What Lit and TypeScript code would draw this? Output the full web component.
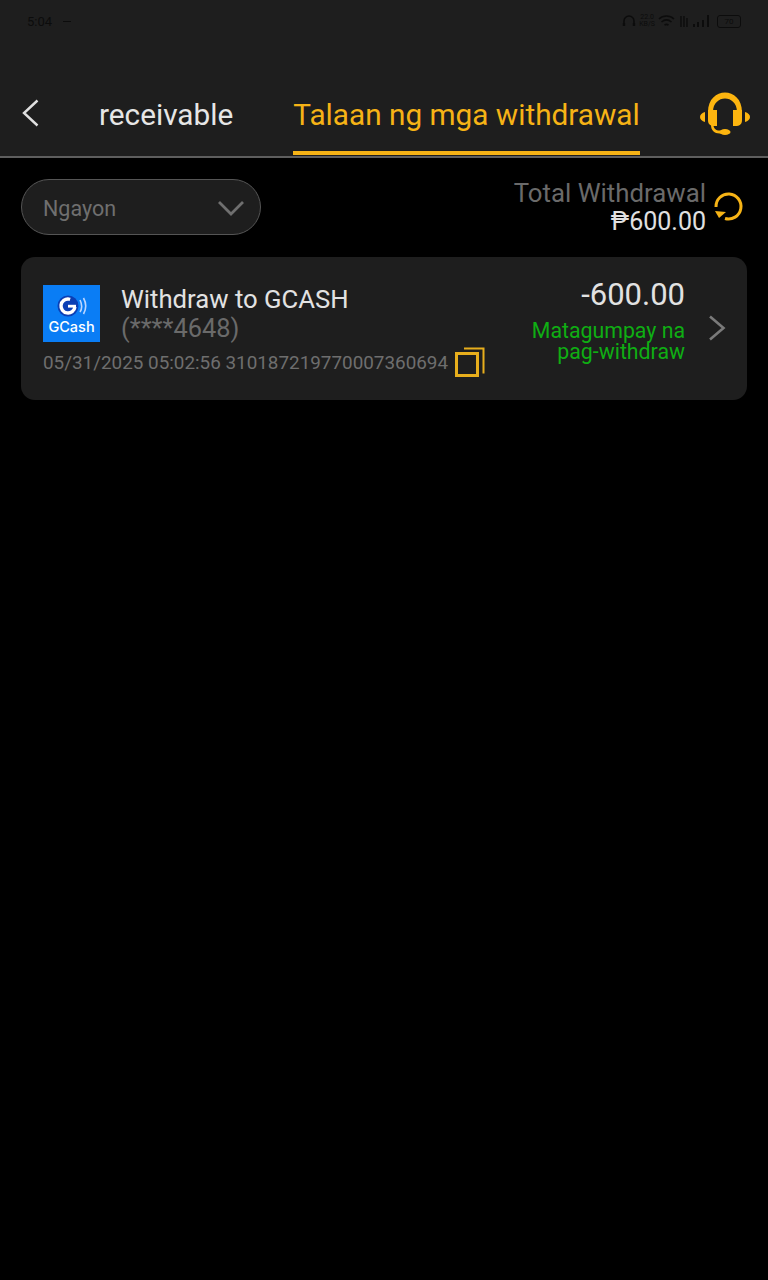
import { LitElement, css, html } from "lit";
import { customElement } from "lit/decorators.js";

@customElement("app-root")
export class AppRoot extends LitElement {
  static styles = css`
    :host {
      display: block;
      width: 768px;
      height: 1280px;
      background: #000;
      font-family: Roboto, "Liberation Sans", sans-serif;
      overflow: hidden;
    }
    svg {
      display: block;
      flex-shrink: 0;
    }
    .top {
      background: #1e1e1e;
      border-bottom: 2px solid #5e5e5e;
      height: 156px;
      display: flex;
      flex-direction: column;
    }
    .status {
      height: 42px;
      padding: 0 27px;
      display: flex;
      align-items: center;
      justify-content: space-between;
      color: #0c0c0c;
      font-size: 13px;
    }
    .status-left {
      display: flex;
      align-items: center;
      gap: 11px;
    }
    .dash {
      width: 8px;
      height: 1px;
      background: #0c0c0c;
    }
    .status-right {
      display: flex;
      align-items: center;
      gap: 3px;
    }
    .speed {
      font-size: 7px;
      line-height: 7px;
      text-align: center;
    }
    .battery {
      width: 22px;
      height: 11px;
      border: 1px solid #0c0c0c;
      border-radius: 3px;
      font-size: 8px;
      line-height: 11px;
      text-align: center;
      margin-left: 3px;
    }
    .nav {
      flex: 1;
      display: flex;
      align-items: stretch;
      padding-left: 21px;
    }
    .back {
      align-self: center;
      margin-top: 27px;
    }
    .tab {
      display: flex;
      align-items: center;
      font-size: 29.75px;
      white-space: nowrap;
      padding-top: 36px;
      box-sizing: border-box;
      border-bottom: 4px solid transparent;
      margin-bottom: 1px;
      color: #e6e6e6;
    }
    .tab.first {
      margin-left: 60px;
    }
    .tab.active {
      margin-left: 60px;
      color: #f6b316;
      border-bottom-color: #f6b316;
    }
    .agent {
      margin-left: 60px;
      align-self: center;
      margin-top: 29px;
    }
    .filter {
      display: flex;
      align-items: center;
      justify-content: space-between;
      padding: 21px 24px 0 21px;
    }
    .select {
      width: 240px;
      height: 56px;
      box-sizing: border-box;
      border: 1px solid #555;
      border-radius: 28px;
      background: #1e1e1e;
      color: #6f6f6f;
      font-size: 21.5px;
      padding: 2px 15px 0 21px;
      display: flex;
      align-items: center;
      justify-content: space-between;
    }
    .total {
      display: flex;
      align-items: center;
      gap: 8px;
    }
    .total-text {
      text-align: right;
      line-height: 28px;
    }
    .total-label {
      font-size: 25.8px;
      color: #6a6a6a;
    }
    .total-value {
      font-size: 25px;
      line-height: 26px;
      color: #e0e0e0;
      padding-top: 2px;
    }
    .card {
      margin: 22px 21px 0;
      height: 143px;
      box-sizing: border-box;
      border-radius: 14px;
      background: #1e1e1e;
      padding: 0 21px 0 22px;
      display: flex;
      align-items: center;
    }
    .info {
      flex: 1;
      min-width: 0;
      margin-top: 4px;
    }
    .head {
      display: flex;
      align-items: center;
      gap: 21px;
    }
    .logo {
      width: 57px;
      height: 57px;
      margin-top: -1px;
      background: #0a7df5;
      display: flex;
      flex-direction: column;
      align-items: center;
      padding-top: 10px;
      box-sizing: border-box;
    }
    .logo-name {
      color: #fff;
      font-family: Inter, Roboto, sans-serif;
      font-size: 14.5px;
      font-weight: 500;
      line-height: 16px;
      margin-top: 2px;
    }
    .title {
      font-size: 25.7px;
      line-height: 29px;
      color: #e2e2e2;
    }
    .account {
      font-size: 25.4px;
      line-height: 29px;
      color: #6a6a6a;
    }
    .meta {
      display: flex;
      align-items: center;
      gap: 7px;
      margin-top: 6px;
      font-size: 18.88px;
      color: #6e6e6e;
      white-space: nowrap;
    }
    .copy {
      margin-top: -2px;
    }
    .side {
      display: flex;
      align-items: center;
      gap: 23px;
      margin-top: -1px;
    }
    .result {
      text-align: right;
      margin-bottom: 17px;
    }
    .amount {
      font-size: 31px;
      line-height: 36px;
      color: #e2e2e2;
    }
    .state {
      margin-top: 7px;
      font-size: 21.3px;
      line-height: 21px;
      color: #0fae13;
    }
  `;

  render() {
    return html`
      <div class="top">
        <div class="status">
          <div class="status-left"><span>5:04</span><span class="dash"></span></div>
          <div class="status-right">
            <svg width="14" height="14" viewBox="0 0 14 14" fill="none" stroke="#0c0c0c" stroke-width="1.6">
              <path d="M2 11V7a5 5 0 0 1 10 0v4" />
              <path d="M2 9v3M12 9v3" stroke-width="2.4" />
            </svg>
            <div class="speed">22.0<br />KB/S</div>
            <svg width="18" height="14" viewBox="0 0 18 14" fill="none" stroke="#0c0c0c" stroke-width="1.6">
              <path d="M1 5c4-4 11-4 15 0M3.500 8c3-2.500 7-2.500 10 0M6.500 11c1.500-1 2.500-1 4 0" />
            </svg>
            <svg width="10" height="14" viewBox="0 0 10 14" fill="none" stroke="#0c0c0c" stroke-width="1.400">
              <path d="M2 2v11M5 2v11M8 4v9" />
            </svg>
            <svg width="19" height="14" viewBox="0 0 19 14" fill="#0c0c0c">
              <path d="M1 10h2v3H1zM5 8h2v5H5zM10 6h2v7h-2zM15 1h2v12h-2z" />
            </svg>
            <div class="battery">70</div>
          </div>
        </div>
        <div class="nav">
          <svg class="back" width="18" height="28" viewBox="0 0 18 28" fill="none" stroke="#e0e0e0" stroke-width="2.400">
            <path d="M16.500 1.500 3 14l13.500 12.500" />
          </svg>
          <div class="tab first">receivable</div>
          <div class="tab active">Talaan ng mga withdrawal</div>
          <svg class="agent" width="50" height="43" viewBox="0 0 50 43" fill="#fdb50f">
            <path d="M8 20C8 -6 42 -6 42 20h-5C37 2 13 2 13 20z" />
            <path d="M8 18h9v16h-2c-5 0-7-2-7-6zM33 18h9v10c0 4-2 6-7 6h-2z" />
            <path d="M5 20v10C2 29 0 27.500 0 25 0 22.500 2 21 5 20zM45 20v10c3-1 5-2.500 5-5 0-2.500-2-4-5-5z" />
            <path d="M11 33h2.500c0 3.500 2.500 5.500 6 5.500H24v3h-4.500C14.500 41.500 11 38.500 11 33z" />
            <ellipse cx="25" cy="40" rx="5.500" ry="3" />
          </svg>
        </div>
      </div>

      <div class="filter">
        <div class="select">
          <span>Ngayon</span>
          <svg width="28" height="18" viewBox="0 0 28 18" fill="none" stroke="#6f6f6f" stroke-width="2.800">
            <path d="M2 3l12 12L26 3" />
          </svg>
        </div>
        <div class="total">
          <div class="total-text">
            <div class="total-label">Total Withdrawal</div>
            <div class="total-value">₱600.00</div>
          </div>
          <svg width="30" height="30" viewBox="0 0 30 30" fill="none" stroke="#f6b316" stroke-width="3">
            <path d="M2 15A12.500 12.500 0 1 1 11 26.500" />
            <path d="M1 19l11 1-7 6z" fill="#f6b316" stroke="none" />
          </svg>
        </div>
      </div>

      <div class="card">
        <div class="info">
          <div class="head">
            <div class="logo">
              <svg width="30" height="22" viewBox="0 0 30 22" fill="none">
                <circle cx="11" cy="11" r="10.500" fill="#0b3fb5" />
                <circle cx="11" cy="11" r="7" stroke="#fff" stroke-width="3.400" stroke-dasharray="34 10" transform="rotate(8 11 11)" />
                <path d="M11 9.800h8v2.800h-8z" fill="#fff" />
                <path d="M23 5c2 4 2 9 0 12M26.500 3c2.800 5 2.800 11 0 16" stroke="#bcd6ff" stroke-width="1.600" />
              </svg>
              <div class="logo-name">GCash</div>
            </div>
            <div>
              <div class="title">Withdraw to GCASH</div>
              <div class="account">(****4648)</div>
            </div>
          </div>
          <div class="meta">
            <span>05/31/2025 05:02:56 310187219770007360694</span>
            <svg class="copy" width="30" height="30" viewBox="0 0 30 30" fill="none" stroke="#e7ae1c" stroke-width="3">
              <rect x="1.500" y="6.500" width="21" height="22" />
              <path d="M9 1.500h19.500v25" stroke-width="2" />
            </svg>
          </div>
        </div>
        <div class="side">
          <div class="result">
            <div class="amount">-600.00</div>
            <div class="state">Matagumpay na<br />pag-withdraw</div>
          </div>
          <svg width="18" height="26" viewBox="0 0 18 26" fill="none" stroke="#7a7a7a" stroke-width="2.600">
            <path d="M2 1.500 15.500 13 2 24.500" />
          </svg>
        </div>
      </div>
    `;
  }
}

declare global {
  interface HTMLElementTagNameMap {
    "app-root": AppRoot;
  }
}
